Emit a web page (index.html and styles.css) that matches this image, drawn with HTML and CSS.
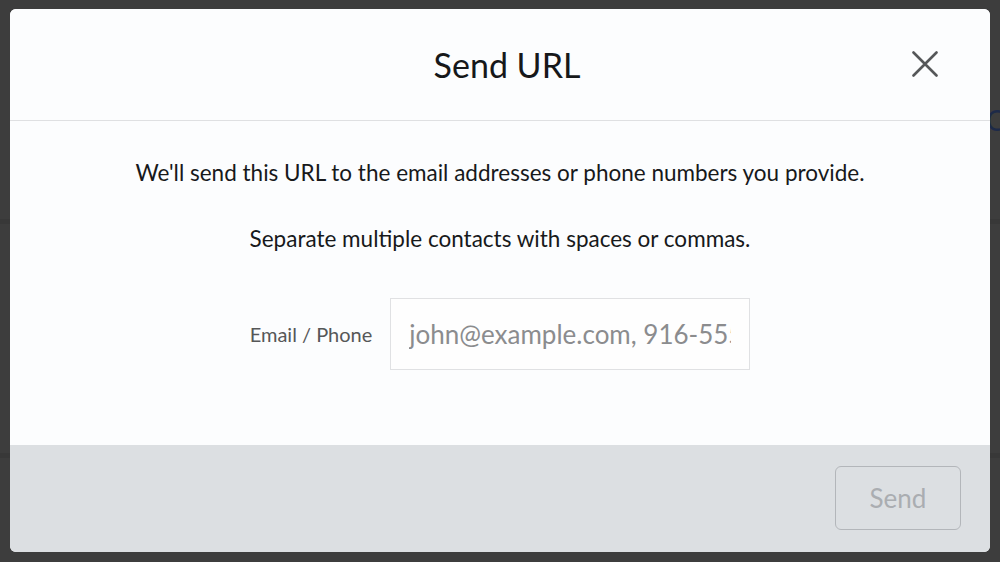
FILE: index.html
```html
<!DOCTYPE html>
<html lang="en">
<head>
<meta charset="utf-8">
<title>Send URL</title>
<link rel="stylesheet" href="styles.css">
</head>
<body>
<div class="backdrop">
  <span class="bg-glyph">C</span>
  <div class="bg-band band-1"></div>
  <div class="bg-band band-2"></div>
  <div class="modal">
    <header class="modal-header">
      <h1 class="modal-title">Send URL</h1>
      <button class="close-btn" aria-label="Close">
        <svg width="26" height="26" viewBox="0 0 26 26"><path d="M1.5 1.5 L24.5 24.5 M24.5 1.5 L1.5 24.5" stroke="#555759" stroke-width="2.6" stroke-linecap="round" fill="none"/></svg>
      </button>
    </header>
    <main class="modal-body">
      <p class="intro">We'll send this URL to the email addresses or phone numbers you provide.</p>
      <p class="hint">Separate multiple contacts with spaces or commas.</p>
      <div class="field-row">
        <label class="field-label" for="contacts">Email / Phone</label>
        <input class="field-input" id="contacts" type="text" placeholder="john@example.com, 916-555-1234">
      </div>
    </main>
    <footer class="modal-footer">
      <button class="send-btn" disabled>Send</button>
    </footer>
  </div>
</div>
</body>
</html>
```

FILE: styles.css
```css
html, body {
  margin: 0;
  padding: 0;
}
body {
  width: 1000px;
  height: 562px;
  overflow: hidden;
  background: #3d3d3d;
  font-family: "Lato", "Noto Sans", sans-serif;
}
.backdrop {
  position: relative;
  width: 1000px;
  height: 562px;
  padding: 9px 10px 10px;
  box-sizing: border-box;
  overflow: hidden;
}
.bg-glyph {
  position: absolute;
  left: 986px;
  top: 106px;
  font-size: 28px;
  color: #1d2a48;
  line-height: 1;
}
.bg-band {
  position: absolute;
  left: 0;
  width: 1000px;
  height: 5px;
  background: #383838;
}
.band-1 { top: 219px; }
.band-2 { top: 453px; }
.modal {
  position: relative;
  width: 980px;
  height: 543px;
  border-radius: 6px;
  overflow: hidden;
  display: flex;
  flex-direction: column;
  background: #fcfdfe;
}
.modal-header {
  position: relative;
  height: 111px;
  flex: none;
  display: flex;
  align-items: center;
  justify-content: center;
  border-bottom: 1px solid #dfe0e2;
  background: #fcfdfe;
}
.modal-title {
  margin: 0;
  font-size: 34px;
  font-weight: 400;
  color: #16181a;
  padding-left: 14px;
}
.close-btn {
  position: absolute;
  right: 52px;
  top: 42px;
  width: 26px;
  height: 26px;
  padding: 0;
  border: 0;
  background: none;
  display: flex;
}
.modal-body {
  flex: 1;
  display: flex;
  flex-direction: column;
  align-items: center;
  padding-top: 38px;
  color: #17191b;
  font-size: 22.5px;
}
.intro, .hint {
  margin: 0;
  line-height: 28px;
}
.hint {
  margin-top: 38px;
}
.field-row {
  margin-top: 45px;
  display: flex;
  align-items: center;
  gap: 18px;
}
.field-label {
  font-size: 20px;
  color: #565758;
}
.field-input {
  width: 360px;
  height: 72px;
  box-sizing: border-box;
  border: 1px solid #e0e1e3;
  background: #fefefe;
  padding: 0 18px;
  font-family: inherit;
  font-size: 26px;
  color: #333;
  outline: none;
}
.field-input::placeholder {
  color: #8b8c8e;
}
.modal-footer {
  height: 107px;
  flex: none;
  background: #dcdfe2;
  display: flex;
  justify-content: flex-end;
  align-items: flex-start;
  padding: 21px 29px 0 0;
  box-sizing: border-box;
}
.send-btn {
  width: 126px;
  height: 64px;
  border: 1px solid #b3b6ba;
  border-radius: 6px;
  background: transparent;
  font-family: inherit;
  font-size: 26px;
  color: #aaadb1;
}
```
